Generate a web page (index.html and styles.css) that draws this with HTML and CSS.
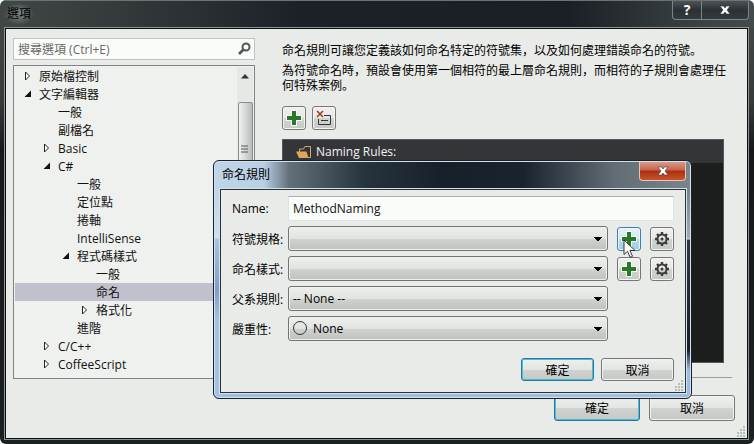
FILE: index.html
```
<!DOCTYPE html>
<html lang="zh-Hant">
<head>
<meta charset="utf-8">
<title>選項</title>
<link rel="stylesheet" href="styles.css">
</head>
<body>
<svg class="defs" aria-hidden="true">
  <symbol id="plus" viewBox="0 0 16 16"><path d="M5 0h6v5h5v6h-5v5H5v-5H0V5h5z" fill="#f8faf6"/><path d="M6 1h4v5h5v4h-5v5H6v-5H1V6h5z" fill="#28782a"/></symbol>
  <symbol id="gear" viewBox="0 0 16 16"><circle cx="8" cy="8" r="4.500" fill="none" stroke="#3c3c3c" stroke-width="2"/><circle cx="8" cy="8" r="1.500" fill="#3c3c3c"/><path d="M8 1v2.500M8 12.500V15M1 8h2.500M12.500 8H15M3 3l2 2M11 11l2 2M13 3l-2 2M5 11l-2 2" stroke="#3c3c3c" stroke-width="2.400"/></symbol>
  <symbol id="closed" viewBox="0 0 7 10"><path d="M1.500 1v8L5.500 5z" fill="#fff" stroke="#222" stroke-width="1"/></symbol>
  <symbol id="open" viewBox="0 0 7 10"><path d="M7 1.500V8H.5z" fill="#111"/></symbol>
  <symbol id="cross" viewBox="0 0 12 10"><path d="M1 1h3.500L6 3 7.500 1H11L8 5l3 4H7.500L6 7 4.500 9H1l3-4z" fill="#fff" stroke="#3d3d40" stroke-width=".6"/></symbol>
  <symbol id="grip" viewBox="0 0 11 11"><path d="M8 0h2v2H8zM8 3h2v2H8zM8 6h2v2H8zM8 9h2v2H8zM5 3h2v2H5zM5 6h2v2H5zM5 9h2v2H5zM2 6h2v2H2zM2 9h2v2H2z" fill="#b9bcba"/></symbol>
</svg>
<main class="window">
  <header class="titlebar">
    <h1>選項</h1>
    <div class="caption">
      <button type="button" class="help" aria-label="說明">?</button>
      <button type="button" class="close" aria-label="關閉"><svg width="12" height="10"><use href="#cross"/></svg></button>
    </div>
  </header>
  <div class="client">
    <div class="columns">
      <aside class="side">
        <div class="search">
          <input type="text" placeholder="搜尋選項 (Ctrl+E)" aria-label="搜尋選項">
          <svg width="16" height="16" viewBox="0 0 16 16"><circle cx="10" cy="6" r="3.500" fill="none" stroke="#555" stroke-width="2"/><path d="M7.500 8.500 3 13" stroke="#555" stroke-width="2.600"/></svg>
        </div>
        <div class="treebox">
          <ul class="tree">
            <li><svg><use href="#closed"/></svg>原始檔控制</li>
            <li><svg><use href="#open"/></svg>文字編輯器</li>
            <li class="l1"><i></i>一般</li>
            <li class="l1"><i></i>副檔名</li>
            <li class="l1"><svg><use href="#closed"/></svg>Basic</li>
            <li class="l1"><svg><use href="#open"/></svg>C#</li>
            <li class="l2"><i></i>一般</li>
            <li class="l2"><i></i>定位點</li>
            <li class="l2"><i></i>捲軸</li>
            <li class="l2"><i></i>IntelliSense</li>
            <li class="l2"><svg><use href="#open"/></svg>程式碼樣式</li>
            <li class="l3"><i></i>一般</li>
            <li class="l3 selected"><i></i>命名</li>
            <li class="l3"><svg><use href="#closed"/></svg>格式化</li>
            <li class="l2"><i></i>進階</li>
            <li class="l1"><svg><use href="#closed"/></svg>C/C++</li>
            <li class="l1"><svg><use href="#closed"/></svg>CoffeeScript</li>
          </ul>
          <div class="scrollbar">
            <svg width="8" height="5" viewBox="0 0 8 5"><path d="M4 0l4 4.500H0z" fill="#333"/></svg>
            <div class="thumb"><svg width="8" height="8" viewBox="0 0 8 8"><path d="M0 1h7M0 4h7M0 7h7" stroke="#555"/></svg></div>
          </div>
        </div>
      </aside>
      <section class="content">
        <p>命名規則可讓您定義該如何命名特定的符號集<span lang="ja">，</span>以及如何處理錯誤命名的符號<span lang="ja">。</span></p>
        <p>為符號命名時<span lang="ja">，</span>預設會使用第一個相符的最上層命名規則<span lang="ja">，</span>而相符的子規則會處理任何特殊案例<span lang="ja">。</span></p>
        <div class="toolbar">
          <button type="button" class="icon" aria-label="新增"><svg width="16" height="16"><use href="#plus"/></svg></button>
          <button type="button" class="icon" aria-label="移除"><svg width="16" height="16" viewBox="0 0 16 16"><path d="M8 5.500h6.500v9h-12V9" fill="none" stroke="#333"/><path d="M5 10.500h7" stroke="#333"/><path d="M1 1l6 6M7 1 1 7" stroke="#a93a24" stroke-width="1.600"/></svg></button>
        </div>
        <div class="rules">
          <h2><svg width="16" height="14" viewBox="0 0 16 14"><path d="M3.500 11.500V4h4l1.500-2.500h5.500v11H4" fill="none" stroke="#d8a862"/><path d="M0 6.500h10.500l2 6.500H3z" fill="#dba75c"/></svg>Naming Rules:</h2>
        </div>
        <hr>
      </section>
    </div>
    <footer>
      <button type="button" class="push default">確定</button>
      <button type="button" class="push">取消</button>
    </footer>
    <svg class="grip" width="11" height="11"><use href="#grip"/></svg>
  </div>
</main>

<form class="dialog" role="dialog" aria-labelledby="rule-title">
  <header>
    <h2 id="rule-title">命名規則</h2>
    <button type="button" class="red" aria-label="關閉"><svg width="12" height="10"><use href="#cross"/></svg></button>
  </header>
  <div class="panel">
    <div class="fields">
      <label for="name">Name:</label>
      <input id="name" type="text" value="MethodNaming">
      <label for="spec">符號規格:</label>
      <select id="spec"><option></option></select>
      <div class="hot">
        <button type="button" class="icon hover" aria-label="新增符號規格"><svg width="16" height="16"><use href="#plus"/></svg></button>
        <svg class="pointer" width="13" height="20" viewBox="0 0 13 20"><path d="M1 1v14.500l3.500-3.200 2.700 6 2.300-1-2.600-5.800H12z" fill="#fff" stroke="#222" stroke-width=".9"/></svg>
      </div>
      <button type="button" class="icon" aria-label="管理符號規格"><svg width="16" height="16"><use href="#gear"/></svg></button>
      <label for="style">命名樣式:</label>
      <select id="style"><option></option></select>
      <button type="button" class="icon" aria-label="新增命名樣式"><svg width="16" height="16"><use href="#plus"/></svg></button>
      <button type="button" class="icon" aria-label="管理命名樣式"><svg width="16" height="16"><use href="#gear"/></svg></button>
      <label for="parent">父系規則:</label>
      <select id="parent"><option>-- None --</option></select>
      <label for="severity">嚴重性:</label>
      <div class="severity">
        <select id="severity"><option>None</option></select>
        <svg width="16" height="16" viewBox="0 0 16 16"><circle cx="8" cy="8" r="6.500" fill="none" stroke="#333"/></svg>
      </div>
    </div>
    <div class="actions">
      <button type="button" class="push default">確定</button>
      <button type="button" class="push">取消</button>
    </div>
    <svg class="grip" width="11" height="11"><use href="#grip"/></svg>
  </div>
</form>
</body>
</html>
```
FILE: styles.css
```
* { box-sizing: border-box; }
body, h1, h2, p, ul { margin: 0; padding: 0; }
body, button, input, select {
  font-family: "Open Sans", "Noto Sans CJK TC", sans-serif;
  font-size: 12px;
  color: #111;
}
h1, h2 { font-size: 12px; font-weight: 400; }
.defs { position: absolute; width: 0; height: 0; }
svg { display: block; flex: none; }

.window {
  min-height: 100vh;
  display: flex;
  flex-direction: column;
  padding: 0 5px 4px 4px;
  border-radius: 6px;
  background: linear-gradient(90deg, #414745 0, #343a3b 16%, #1b2127 40%, #1a1f25 75%, #3b4244 93%, #444b4c) top / 100% 28px no-repeat, linear-gradient(#454b4a, #353b3b 100px, #15191c 150px, #1b2022);
}
.titlebar { height: 27px; display: flex; justify-content: space-between; border-top: 1px solid #6b7473; }
.titlebar h1 {
  align-self: center;
  padding: 0 3px;
  line-height: 22px;
  color: #000;
  background: radial-gradient(closest-side, #85898a, transparent);
}
.caption {
  display: flex;
  height: 19px;
  border: 1px solid #7c8485;
  border-top: 0;
  border-radius: 0 0 4px 4px;
  background: linear-gradient(#4d5355, #2b3134 50%, #343b3d);
}
.caption button {
  display: flex;
  align-items: center;
  justify-content: center;
  border: 0;
  padding: 0;
  background: none;
  color: #fff;
}
.caption .help { width: 28px; font-size: 14px; font-weight: 700; line-height: 18px; }
.caption .close { width: 47px; border-left: 1px solid #7c8485; }

.client {
  position: relative;
  flex: 1;
  display: flex;
  flex-direction: column;
  padding: 9px 12px 17px 7px;
  border: 1px solid #0b0d0e;
  outline: 1px solid #8d9491;
  margin: 1px;
  background: #e9ebe8;
}
.columns { flex: 1; display: flex; gap: 27px; }
.side { width: 242px; flex: none; display: flex; flex-direction: column; gap: 5px; }
.search {
  display: flex;
  align-items: center;
  height: 22px;
  padding-right: 2px;
  border: 1px solid #bfc3c3;
  background: #fafcf9;
}
.search input { flex: 1; min-width: 0; border: 0; padding: 0 4px; background: none; outline: 0; }
.search input::placeholder { color: #686868; }
.treebox { flex: 1; display: flex; border: 1px solid #7f8385; background: #eff1ee; padding: 1px; }
.tree { flex: 1; list-style: none; }
.tree li { display: flex; align-items: center; gap: 8px; height: 18px; padding-left: 9px; white-space: nowrap; }
.tree svg, .tree i { width: 7px; height: 10px; flex: none; }
.tree .l1 { padding-left: 28px; }
.tree .l2 { padding-left: 47px; }
.tree .l3 { padding-left: 66px; }
.tree .selected { background: #c0c1cc; }
.scrollbar {
  width: 16px;
  display: flex;
  flex-direction: column;
  align-items: center;
  gap: 23px;
  padding: 7px 0 80px;
  background: #e6e8e5;
}
.thumb {
  flex: 1;
  width: 15px;
  display: flex;
  justify-content: center;
  padding-top: 42px;
  border: 1px solid #888d8e;
  border-radius: 2px;
  background: linear-gradient(90deg, #f0f1ef, #d8dad9 45%, #b7babb);
}

.content { flex: 1; min-width: 0; display: flex; flex-direction: column; padding-right: 3px; }
.content p { line-height: 15px; margin: 5px 0; color: #000; }
.content p + p { margin: 0; }
.content [lang="ja"] { font-family: "Open Sans", "Noto Sans CJK JP", sans-serif; }
.toolbar { display: flex; gap: 6px; margin: 13px 0 9px; }
.icon {
  display: flex;
  align-items: center;
  justify-content: center;
  width: 24px;
  height: 24px;
  padding: 0;
  border: 1px solid #747977;
  border-radius: 3px;
  background: linear-gradient(#f0f1ef, #e5e7e4 50%, #d0d3d0 51%, #c6c9c6);
  box-shadow: inset 0 0 0 1px #f5f6f4;
}
.icon.hover {
  border-color: #3c7fb1;
  background: linear-gradient(#e4f2fa, #cce7f6 50%, #b0d9ef 51%, #9dcde8);
}
.rules { flex: 1; margin-right: 8px; border: 1px solid #55585a; background: #1c1e1d; }
.rules h2 { display: flex; align-items: center; gap: 4px; height: 23px; padding-left: 13px; color: #f2f2f2; background: #343539; }
.content hr { width: 100%; margin: 14px 0 1px; border: 0; border-top: 1px solid #999d9b; }
footer { display: flex; justify-content: flex-end; gap: 9px; margin-top: 16px; }
.push {
  width: 73px;
  height: 23px;
  padding: 0;
  border: 1px solid #747977;
  border-radius: 3px;
  color: #000;
  background: linear-gradient(#eff0ee, #e3e5e2 50%, #d0d3d0 51%, #c5c8c5);
  box-shadow: inset 0 0 0 1px #f3f4f2;
}
.push.default { border-color: #2c7795; box-shadow: inset 0 0 0 1px #47bfe2; }
footer .push { width: 86px; height: 26px; }
.grip { position: absolute; right: 1px; bottom: 1px; }

.dialog {
  position: absolute;
  top: 160px;
  left: 213px;
  right: 62px;
  padding: 0 4px 5px 5px;
  border: 1px solid #17222d;
  border-radius: 6px;
  box-shadow: inset 0 0 0 1px #d5e2ec;
  background:
    linear-gradient(90deg, #bfd5e8 0, #b9cfe3 50px, #63707a 75px, #27333d 150px, #162029 230px, #1a242e 310px, #626c74 400px, #7a848a) top / 100% 29px no-repeat,
    linear-gradient(#7a848a, #a3abae 48px, #dce0e0 49px, #30373d 50px, #171e25 160px, #9dbce0 180px) 100% 29px / 8px 100% no-repeat,
    linear-gradient(#bfd5e8, #cfe0ee 48px, #a6c5e3 49px, #809fc6 100px, #a4c2e4 130px) 0 29px / 8px 100% no-repeat,
    #a2bfe3;
}
.dialog header { height: 27px; display: flex; justify-content: space-between; align-items: flex-start; padding: 1px 1px 0 3px; }
.dialog header h2 { line-height: 25px; color: #000; }
.red {
  display: flex;
  align-items: center;
  justify-content: center;
  width: 47px;
  height: 19px;
  border: 1px solid #e4c5b9;
  border-top: 0;
  border-radius: 0 0 4px 4px;
  background: linear-gradient(#d99a86, #c8634b 45%, #aa2f12 50%, #cc5229);
}
.panel {
  position: relative;
  margin: 1px 1px 0;
  padding: 6px 11px 11px;
  border: 1px solid #26333d;
  outline: 1px solid #d5e2ec;
  background: #e9ebe8;
}
.fields { display: grid; grid-template-columns: 47px 1fr 24px 24px; gap: 5px 9px; align-items: center; }
.fields label { grid-column: 1; white-space: nowrap; color: #000; }
.fields input { grid-column: 2 / -1; width: 100%; height: 25px; padding: 0 4px; border: 1px solid #dfe3e5; border-top-color: #abadb3; background: #fafcf9; }
.fields select {
  appearance: none;
  width: 100%;
  height: 25px;
  padding: 0 20px 0 4px;
  border: 1px solid #707573;
  border-radius: 3px;
  color: #000;
  background:
    linear-gradient(to bottom right, #000 50%, transparent 51%) right 5px top 10px / 4px 4px no-repeat,
    linear-gradient(to bottom left, #000 50%, transparent 51%) right 9px top 10px / 4px 4px no-repeat,
    linear-gradient(#eff0ee, #e1e3e0 50%, #cfd2cf 51%, #bec1be);
  box-shadow: inset 0 0 0 1px #eff1ee;
}
.severity { position: relative; }
.severity select { display: block; padding-left: 24px; }
.severity svg { position: absolute; left: 4px; top: 4px; pointer-events: none; }
.hot { position: relative; }
.pointer { position: absolute; left: 6px; top: 12px; pointer-events: none; }
.actions { display: flex; justify-content: flex-end; gap: 7px; margin-top: 17px; }
```
